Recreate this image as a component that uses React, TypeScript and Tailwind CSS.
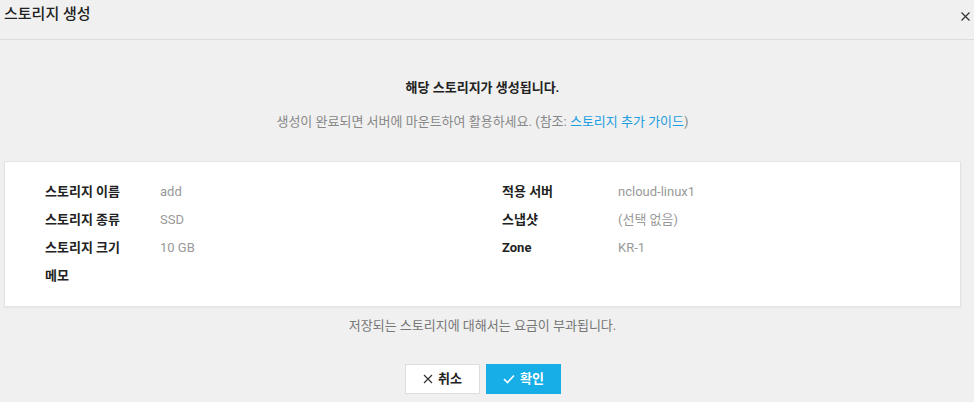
function InfoRow({ label, value, w = "w-[115px]" }: { label: string; value?: string; w?: string }) {
  return (
    <div className="flex h-[28px] items-center">
      <div className={`${w} shrink-0 font-bold text-[#222]`}>{label}</div>
      <div className="text-[#999]">{value}</div>
    </div>
  );
}

export default function App() {
  return (
    <div
      className="w-[974px] h-[402px] bg-[#f0f0f0] text-[13px] overflow-hidden"
      style={{ fontFamily: 'Roboto, "Noto Sans CJK KR", sans-serif' }}
    >
      {/* header */}
      <div className="flex h-[40px] items-start justify-between border-b border-[#dcdcdc] pl-[4px] pr-[2px]">
        <h1 className="mt-[3px] text-[15px] font-medium text-[#222]">스토리지 생성</h1>
        <button className="mt-[11px] mr-[2px] flex h-[10px] w-[10px] items-center justify-center">
          <svg width="9" height="9" viewBox="0 0 9 9" fill="none" stroke="#333" strokeWidth="1.2">
            <path d="M0.5 0.5L8.5 8.5M8.5 0.5L0.5 8.5" />
          </svg>
        </button>
      </div>

      <div className="w-[957px] ml-[4px]">
        <div className="pt-[38px] text-center font-bold text-[#222]">해당 스토리지가 생성됩니다.</div>
        <div className="mt-[14px] text-center text-[#888]">
          생성이 완료되면 서버에 마운트하여 활용하세요. (참조: <span className="text-[#1c9ee0]">스토리지 추가 가이드</span>)
        </div>

        <div className="mt-[30px] grid grid-cols-[457px_1fr] border border-[#e3e3e3] bg-white pl-[40px] pt-[16px] pb-[16px] shadow-[0_1px_2px_rgba(0,0,0,0.05)]">
          <div>
            <InfoRow label="스토리지 이름" value="add" />
            <InfoRow label="스토리지 종류" value="SSD" />
            <InfoRow label="스토리지 크기" value="10 GB" />
            <InfoRow label="메모" />
          </div>
          <div>
            <InfoRow w="w-[116px]" label="적용 서버" value="ncloud-linux1" />
            <InfoRow w="w-[116px]" label="스냅샷" value="(선택 없음)" />
            <InfoRow w="w-[116px]" label="Zone" value="KR-1" />
          </div>
        </div>

        <div className="mt-[9px] text-center text-[#777]">저장되는 스토리지에 대해서는 요금이 부과됩니다.</div>

        <div className="mt-[28px] flex justify-center gap-[6px] pl-[1px]">
          <button className="flex h-[30px] w-[75px] items-center justify-center gap-[5px] border border-[#dedede] bg-white font-bold text-[#222]">
            <svg width="10" height="10" viewBox="0 0 10 10" fill="none" stroke="#333" strokeWidth="1.2">
              <path d="M1 1L9 9M9 1L1 9" />
            </svg>
            취소
          </button>
          <button className="flex h-[30px] w-[75px] items-center justify-center gap-[5px] bg-[#17ade6] font-bold text-white">
            <svg width="12" height="10" viewBox="0 0 12 10" fill="none" stroke="#fff" strokeWidth="1.6">
              <path d="M1 5L4.5 8.5L11 1.5" />
            </svg>
            확인
          </button>
        </div>
      </div>
    </div>
  );
}
